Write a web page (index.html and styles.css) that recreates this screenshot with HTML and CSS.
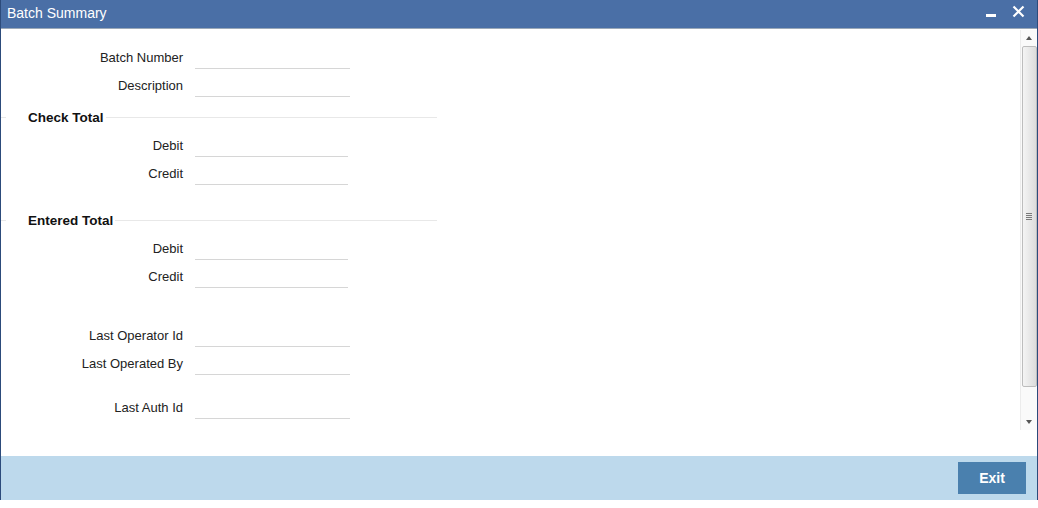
FILE: index.html
```html
<!DOCTYPE html>
<html lang="en">

<head>
  <meta charset="UTF-8">
  <title>Batch Summary</title>
  <link rel="stylesheet" href="styles.css">
</head>

<body>
  <div class="window">
    <div class="title-bar">
      <span class="title">Batch Summary</span>
      <div class="controls">
        <span class="min"></span>
        <svg class="close" width="13" height="13" viewBox="0 0 13 13">
          <path d="M1.5 1.5 L11.5 11.5 M11.5 1.5 L1.5 11.5" stroke="#fff" stroke-width="2.2" />
        </svg>
      </div>
    </div>

    <div class="main">
      <div class="form">
        <div class="row">
          <label>Batch Number</label>
          <div class="field"></div>
        </div>
        <div class="row">
          <label>Description</label>
          <div class="field"></div>
        </div>

        <div class="section first">
          <span class="sec-title">Check Total</span>
        </div>
        <div class="row">
          <label>Debit</label>
          <div class="field short"></div>
        </div>
        <div class="row">
          <label>Credit</label>
          <div class="field short"></div>
        </div>

        <div class="section">
          <span class="sec-title">Entered Total</span>
        </div>
        <div class="row">
          <label>Debit</label>
          <div class="field short"></div>
        </div>
        <div class="row">
          <label>Credit</label>
          <div class="field short"></div>
        </div>

        <div class="row gap-lg">
          <label>Last Operator Id</label>
          <div class="field"></div>
        </div>
        <div class="row">
          <label>Last Operated By</label>
          <div class="field"></div>
        </div>
        <div class="row gap-md">
          <label>Last Auth Id</label>
          <div class="field"></div>
        </div>
      </div>

      <div class="scrollbar">
        <div class="arrow up"></div>
        <div class="thumb"><span class="grip"></span></div>
        <div class="arrow down"></div>
      </div>
    </div>

    <div class="footer">
      <button class="exit-btn">Exit</button>
    </div>
  </div>
</body>

</html>
```

FILE: styles.css
```css
body {
  margin: 0;
  background: #fff;
  font-family: 'Liberation Sans', Arial, sans-serif;
}

.window {
  width: 1036px;
  border-left: 1px solid #2c4b7b;
  border-right: 1px solid #2c4b7b;
  background: #fff;
}

.title-bar {
  height: 28px;
  border-bottom: 1px solid #9aa8b8;
  background: #4a6fa6;
  display: flex;
  align-items: center;
  justify-content: space-between;
}

.title {
  color: #fff;
  font-size: 14px;
  margin-left: 6px;
  margin-top: -3px;
}

.controls {
  display: flex;
  align-items: center;
  margin-right: 12px;
  margin-top: -5px;
}

.min {
  width: 10px;
  height: 3px;
  background: #fff;
  margin-right: 16px;
  margin-top: 8px;
}

.main {
  display: flex;
  height: 427px;
}

.form {
  flex: 1;
  padding-top: 14px;
}

.row {
  display: flex;
  height: 28px;
}

.row label {
  width: 182px;
  text-align: right;
  font-size: 13px;
  line-height: 30px;
  color: #222;
}

.field {
  width: 155px;
  height: 23px;
  margin-top: 2px;
  margin-left: 12px;
  border-bottom: 1px solid #d6d6d6;
}

.field.short {
  width: 153px;
}

.section {
  width: 436px;
  height: 28px;
  margin-top: 19px;
  display: flex;
  align-items: center;
}

.section.first {
  margin-top: 4px;
}

.section::before {
  content: "";
  width: 5px;
  border-top: 1px solid #e8e8e8;
  margin-right: 22px;
}

.section::after {
  content: "";
  flex: 1;
  border-top: 1px solid #e8e8e8;
  margin-left: 2px;
}

.sec-title {
  font-size: 13.5px;
  font-weight: bold;
  color: #111;
  padding-top: 1px;
}

.gap-lg {
  margin-top: 31px;
}

.gap-md {
  margin-top: 16px;
}

.scrollbar {
  width: 16px;
  margin-top: 1px;
  height: 400px;
  display: flex;
  flex-direction: column;
  align-items: center;
  background: #fafafa;
  border-left: 1px solid #ececec;
}

.arrow {
  height: 16px;
  width: 16px;
  display: flex;
  align-items: center;
  justify-content: center;
}

.arrow::before {
  content: "";
  border-left: 3px solid transparent;
  border-right: 3px solid transparent;
}

.arrow.up::before {
  border-bottom: 4px solid #555;
}

.arrow.down {
  margin-top: auto;
}

.arrow.down::before {
  border-top: 4px solid #555;
}

.thumb {
  width: 13px;
  height: 339px;
  border: 1px solid #bdbdbd;
  border-radius: 2px;
  background: linear-gradient(to right, #f4f4f4, #dcdcdc);
  display: flex;
  align-items: center;
  justify-content: center;
}

.grip {
  width: 6px;
  height: 7px;
  background: repeating-linear-gradient(to bottom, #7a7a7a 0 1px, transparent 1px 2px);
}

.footer {
  height: 44px;
  background: #bdd9ec;
  display: flex;
  align-items: center;
  justify-content: flex-end;
}

.exit-btn {
  width: 68px;
  height: 32px;
  margin-right: 11px;
  border: none;
  background: #4a80ae;
  color: #fff;
  font-family: inherit;
  font-size: 14px;
  font-weight: bold;
}
```
